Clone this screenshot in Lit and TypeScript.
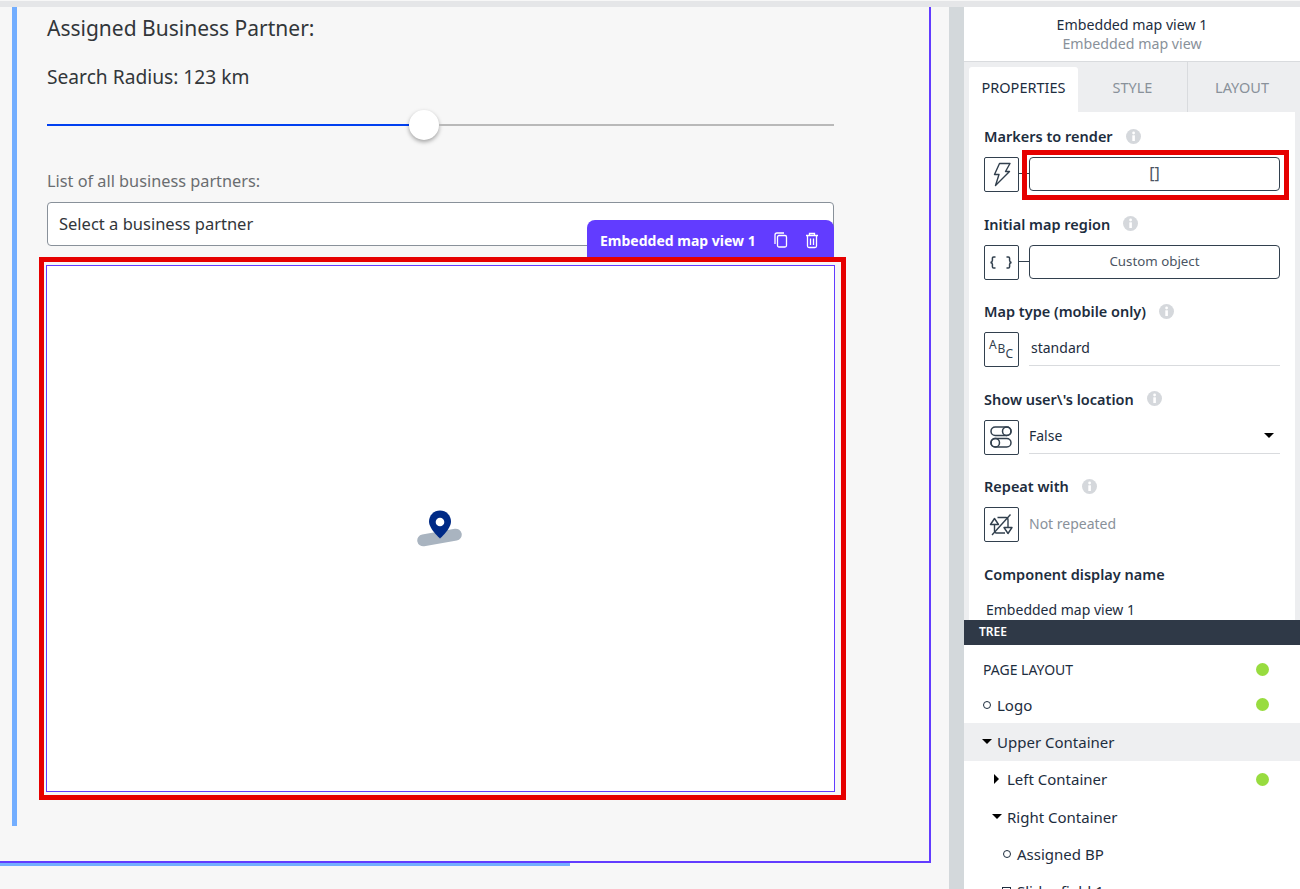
import { LitElement, html, css, svg, nothing } from 'lit';
import { customElement } from 'lit/decorators.js';

const bolt = svg`<path d="M14.500 5.500H25L20.500 13.500H24.500L10.500 27.500L14 16.500H9.500z" fill="none" stroke="#32404e" stroke-width="1.400" stroke-linejoin="round"/>`;
const braces = svg`<path d="M10.500 11H8.700c-.9 0-1.300.5-1.300 1.300v2.200c0 1-.6 1.700-1.900 1.900 1.300.2 1.900.9 1.900 1.900v2.400c0 .8.4 1.300 1.300 1.300h1.800M21.500 11h1.800c.9 0 1.300.5 1.300 1.300v2.200c0 1 .6 1.700 1.900 1.900-1.300.2-1.900.9-1.900 1.900v2.400c0 .8-.4 1.300-1.300 1.300h-1.800" fill="none" stroke="#32404e" stroke-width="1.500"/>`;
const abc = svg`<g fill="#32404e" font-family="'Noto Sans',sans-serif" font-size="12"><text x="4" y="16">A</text><text x="12.500" y="20">B</text><text x="20.500" y="24.500">C</text></g>`;
const toggle = svg`<g fill="none" stroke="#32404e" stroke-width="1.500"><rect x="6" y="6" width="20" height="8.500" rx="4.250"/><rect x="6" y="17.500" width="20" height="8.500" rx="4.250"/><circle cx="21.750" cy="10.250" r="4.250"/><circle cx="10.250" cy="21.750" r="4.250"/></g>`;
const repeat = svg`<g fill="none" stroke="#32404e" stroke-width="1.400" stroke-linejoin="round"><path d="M5.500 16.500L9.500 10.500L13.500 16.500z"/><path d="M9.500 16.500V23q0 2 2 2H20"/><path d="M19 19.500H27L23 25.500z"/><path d="M23 19.500V12q0-2.500-2-2.500H12.500"/><path d="M7 27L25.500 6.500"/></g>`;

type Field = { label: string; icon: unknown; kind: 'button' | 'text' | 'select' | 'muted'; value: string; marked?: boolean };

const fields: Field[] = [
  { label: 'Markers to render', icon: bolt, kind: 'button', value: '[]', marked: true },
  { label: 'Initial map region', icon: braces, kind: 'button', value: 'Custom object' },
  { label: 'Map type (mobile only)', icon: abc, kind: 'text', value: 'standard' },
  { label: "Show user\\'s location", icon: toggle, kind: 'select', value: 'False' },
  { label: 'Repeat with', icon: repeat, kind: 'muted', value: 'Not repeated' },
];

type TreeRow = { label: string; depth: number; mark: 'dot' | 'open' | 'closed' | 'box'; ok?: boolean; active?: boolean };

const tree: TreeRow[] = [
  { label: 'Logo', depth: 0, mark: 'dot', ok: true },
  { label: 'Upper Container', depth: 0, mark: 'open', active: true },
  { label: 'Left Container', depth: 1, mark: 'closed', ok: true },
  { label: 'Right Container', depth: 1, mark: 'open' },
  { label: 'Assigned BP', depth: 2, mark: 'dot' },
  { label: 'Slider field 1', depth: 2, mark: 'box' },
];

@customElement('app-root')
export class AppRoot extends LitElement {
  static styles = css`
    :host {
      display: block;
      width: 1300px;
      height: 889px;
      overflow: hidden;
      background: #f7f7f7;
      font-family: 'Noto Sans', sans-serif;
      color: #32363a;
    }
    .strip { height: 6px; margin-top: 1px; background: #e5e6e8; }
    .page { display: flex; height: 882px; }

    .canvas { width: 949px; flex: none; }
    .frame {
      width: 917px;
      height: 854px;
      border-right: 2px solid #623cff;
      border-bottom: 2px solid #623cff;
      padding-left: 12px;
    }
    .section {
      height: 819px;
      border-left: 5px solid #73aeff;
      padding-left: 30px;
      width: 787px;
      position: relative;
    }
    .progress { width: 570px; height: 3px; background: #73aeff; }
    .title { font-size: 21px; line-height: 28px; padding-top: 7px; height: 35px; color: #32363a; }
    .radius { font-size: 19.200px; line-height: 26px; margin-top: 15px; }
    .slider { display: flex; align-items: center; height: 30px; margin-top: 20px; }
    .track-on { width: 362px; height: 2px; background: #0040f0; }
    .knob {
      width: 30px;
      height: 30px;
      border-radius: 50%;
      background: #fff;
      box-shadow: 0 2px 4px rgba(0, 0, 0, 0.35);
      flex: none;
    }
    .track-off { flex: 1; height: 2px; background: #b9b9b9; }
    .list-label { font-size: 16.300px; line-height: 24px; margin-top: 29px; color: #6a6d70; }
    .select {
      height: 42px;
      margin-top: 9px;
      border: 1px solid #89919a;
      border-radius: 4px;
      background: #fff;
      padding-left: 11px;
      font-size: 16.500px;
      line-height: 42px;
    }
    .toolbar {
      position: absolute;
      left: 570px;
      top: 213px;
      width: 247px;
      height: 37px;
      box-sizing: border-box;
      background: #623cff;
      border-radius: 8px 8px 0 0;
      color: #fff;
      display: flex;
      align-items: center;
      padding: 3px 0 0 13px;
      font-size: 14px;
      font-weight: 700;
    }
    .toolbar span { width: 173px; }
    .toolbar svg { width: 18px; height: 18px; margin-right: 13px; flex: none; }
    .map-mark {
      width: 807px;
      height: 543px;
      margin: 11px 0 0 -8px;
      box-sizing: border-box;
      border: 5px solid #e60000;
      padding: 3px 6px 3px 2px;
    }
    .map {
      height: 100%;
      box-sizing: border-box;
      background: #fff;
      border: 1px solid #623cff;
      display: flex;
      align-items: center;
      justify-content: center;
    }
    .pin { width: 46px; height: 38px; margin: 0 0 0 -1px; }

    .gutter { width: 15px; flex: none; background: #d3d8db; }
    .side { width: 336px; flex: none; background: #fff; display: flex; flex-direction: column; overflow: hidden; }
    .head {
      height: 55px;
      flex: none;
      border-bottom: 1px solid #d9dbde;
      text-align: center;
      box-sizing: border-box;
      padding-top: 8px;
      font-size: 14.200px;
      line-height: 19px;
      color: #1d2d3e;
    }
    .head div + div { color: #89919a; }
    .tabs { display: flex; height: 50px; flex: none; background: #edeef0; padding-left: 5px; }
    .tab {
      width: 109px;
      margin-top: 5px;
      text-align: center;
      line-height: 40px;
      font-size: 14.500px;
      color: #89919a;
      flex: none;
    }
    .tab.active { background: #fff; color: #1d2d3e; border-radius: 3px 3px 0 0; }
    .tab.sep { border-left: 1px solid #d9dbde; margin-top: 0; padding-top: 5px; box-sizing: border-box; }
    .pane {
      height: 508px;
      flex: none;
      overflow: hidden;
      background: #edeef0;
      padding: 0 5px;
    }
    .pane-inner { background: #fff; height: 100%; padding: 14px 15px 0; box-sizing: border-box; }
    .field { height: 87.500px; }
    .label {
      display: flex;
      align-items: center;
      gap: 13px;
      font-size: 14.500px;
      line-height: 20px;
      font-weight: 600;
      color: #1d2d3e;
    }
    .info { width: 15px; height: 15px; flex: none; }
    .row { display: flex; align-items: flex-start; height: 35px; margin-top: 11px; position: relative; }
    .icon {
      width: 35px;
      height: 35px;
      box-sizing: border-box;
      border: 1px solid #32404e;
      border-radius: 2px;
      flex: none;
    }
    .icon svg { display: block; width: 33px; height: 33px; }
    .link { width: 10px; height: 1px; background: #32404e; flex: none; margin-top: 16px; }
    .btn {
      flex: 1;
      height: 32px;
      border: 1px solid #32404e;
      border-radius: 4px;
      text-align: center;
      line-height: 31px;
      font-size: 13.300px;
      color: #4b5563;
    }
    .btn.big { font-size: 16px; }
    .mark {
      position: absolute;
      left: 38px;
      top: -7px;
      width: 267px;
      height: 50px;
      box-sizing: border-box;
      border: 5px solid #e60000;
    }
    .input {
      flex: 1;
      height: 34px;
      box-sizing: border-box;
      margin-left: 10px;
      border-bottom: 1px solid #d9dbde;
      padding-left: 2px;
      font-size: 14px;
      line-height: 32px;
      color: #1d2d3e;
    }
    .input.sel { padding: 0 6px 2px 0; display: flex; justify-content: space-between; align-items: center; line-height: normal; }
    .caret { width: 0; height: 0; border: 5px solid transparent; border-top: 5px solid #000; border-bottom: 0; }
    .muted { margin-left: 10px; font-size: 14px; line-height: 34px; color: #89919a; }
    .name-value { font-size: 14px; line-height: 20px; margin: 16px 0 0 2px; color: #1d2d3e; }

    .tree-bar {
      height: 25px;
      flex: none;
      background: #2f3947;
      color: #fff;
      font-size: 12px;
      font-weight: 600;
      line-height: 23px;
      padding-left: 15px;
    }
    .tree-head {
      display: flex;
      align-items: center;
      justify-content: space-between;
      height: 33px;
      flex: none;
      margin-top: 8px;
      padding: 0 31px 0 19px;
      font-size: 14px;
      color: #1d2d3e;
    }
    .node {
      display: flex;
      align-items: center;
      height: 37.300px;
      flex: none;
      font-size: 15px;
      color: #1d2d3e;
      padding-right: 31px;
    }
    .node.active { background: #eeeff1; }
    .node-mark { width: 15px; display: flex; justify-content: center; align-items: center; flex: none; margin: 0 3px 0 15px; }
    .node-label { flex: 1; }
    .dot { width: 13px; height: 13px; border-radius: 50%; background: #98dc3f; flex: none; }
    .m-dot { width: 8px; height: 8px; border-radius: 50%; border: 1.700px solid #1d2d3e; box-sizing: border-box; }
    .m-box { width: 9px; height: 9px; border: 1.500px solid #1d2d3e; box-sizing: border-box; }
    .m-open { width: 0; height: 0; border: 5px solid transparent; border-top: 5px solid #000; border-bottom: 0; }
    .m-closed { width: 0; height: 0; border: 5px solid transparent; border-left: 5px solid #000; border-right: 0; }
  `;

  private _field(f: Field) {
    return html`
      <div class="field">
        <div class="label">
          ${f.label}
          <svg class="info" viewBox="0 0 15 15">
            <circle cx="7.500" cy="7.500" r="7.500" fill="#d5d8dc"/>
            <rect x="6.300" y="6.300" width="2.600" height="5.700" fill="#fff"/>
            <circle cx="7.600" cy="4" r="1.400" fill="#fff"/>
          </svg>
        </div>
        <div class="row">
          <div class="icon"><svg viewBox="0 0 33 33">${f.icon}</svg></div>
          ${f.kind === 'button' ? html`<div class="link"></div><div class="btn ${f.marked ? 'big' : ''}">${f.value}</div>` : nothing}
          ${f.kind === 'text' ? html`<div class="input">${f.value}</div>` : nothing}
          ${f.kind === 'select' ? html`<div class="input sel"><span>${f.value}</span><i class="caret"></i></div>` : nothing}
          ${f.kind === 'muted' ? html`<div class="muted">${f.value}</div>` : nothing}
          ${f.marked ? html`<div class="mark"></div>` : nothing}
        </div>
      </div>
    `;
  }

  private _node(n: TreeRow) {
    const cls = { dot: 'm-dot', open: 'm-open', closed: 'm-closed', box: 'm-box' }[n.mark];
    return html`
      <div class="node ${n.active ? 'active' : ''}" style="padding-left:${n.depth * 10}px">
        <div class="node-mark"><i class=${cls}></i></div>
        <div class="node-label">${n.label}</div>
        ${n.ok ? html`<div class="dot"></div>` : nothing}
      </div>
    `;
  }

  render() {
    return html`
      <div class="strip"></div>
      <div class="page">
        <div class="canvas">
          <div class="frame">
            <div class="section">
              <div class="title">Assigned Business Partner:</div>
              <div class="radius">Search Radius: 123 km</div>
              <div class="slider">
                <div class="track-on"></div>
                <div class="knob"></div>
                <div class="track-off"></div>
              </div>
              <div class="list-label">List of all business partners:</div>
              <div class="select">Select a business partner</div>
              <div class="map-mark">
                <div class="map">
                  <svg class="pin" viewBox="0 0 46 38">
                    <rect x="0" y="21.500" width="45" height="12" rx="6" fill="#a9b4c0" transform="rotate(-10 22.500 27.500)"/>
                    <path d="M23 .5c-6.100 0-11 4.900-11 11C12 19 23 28.500 23 28.500s11-9.500 11-17C34 5.400 29.100 .5 23 .5z" fill="#002a86"/>
                    <circle cx="23" cy="12" r="4.300" fill="#fff"/>
                  </svg>
                </div>
              </div>
              <div class="toolbar">
                <span>Embedded map view 1</span>
                <svg viewBox="0 0 18 18" fill="none" stroke="#fff" stroke-width="1.300">
                  <rect x="5.500" y="4.500" width="9" height="11.500" rx="1.500"/>
                  <path d="M12 2H5a2 2 0 0 0-2 2v9"/>
                </svg>
                <svg viewBox="0 0 18 18" fill="none" stroke="#fff" stroke-width="1.300">
                  <path d="M3 4.500h12M6.500 4.500V2.500h5v2M4.500 4.500v10.500a1.500 1.500 0 0 0 1.500 1.500h6a1.500 1.500 0 0 0 1.500-1.500V4.500M7.500 7.500v6.500M10.500 7.500v6.500"/>
                </svg>
              </div>
            </div>
          </div>
          <div class="progress"></div>
        </div>
        <div class="gutter"></div>
        <div class="side">
          <div class="head">
            <div>Embedded map view 1</div>
            <div>Embedded map view</div>
          </div>
          <div class="tabs">
            <div class="tab active">PROPERTIES</div>
            <div class="tab">STYLE</div>
            <div class="tab sep">LAYOUT</div>
          </div>
          <div class="pane">
            <div class="pane-inner">
              ${fields.map(f => this._field(f))}
              <div class="label">Component display name</div>
              <div class="name-value">Embedded map view 1</div>
            </div>
          </div>
          <div class="tree-bar">TREE</div>
          <div class="tree-head"><span>PAGE LAYOUT</span><div class="dot"></div></div>
          ${tree.map(n => this._node(n))}
        </div>
      </div>
    `;
  }
}
